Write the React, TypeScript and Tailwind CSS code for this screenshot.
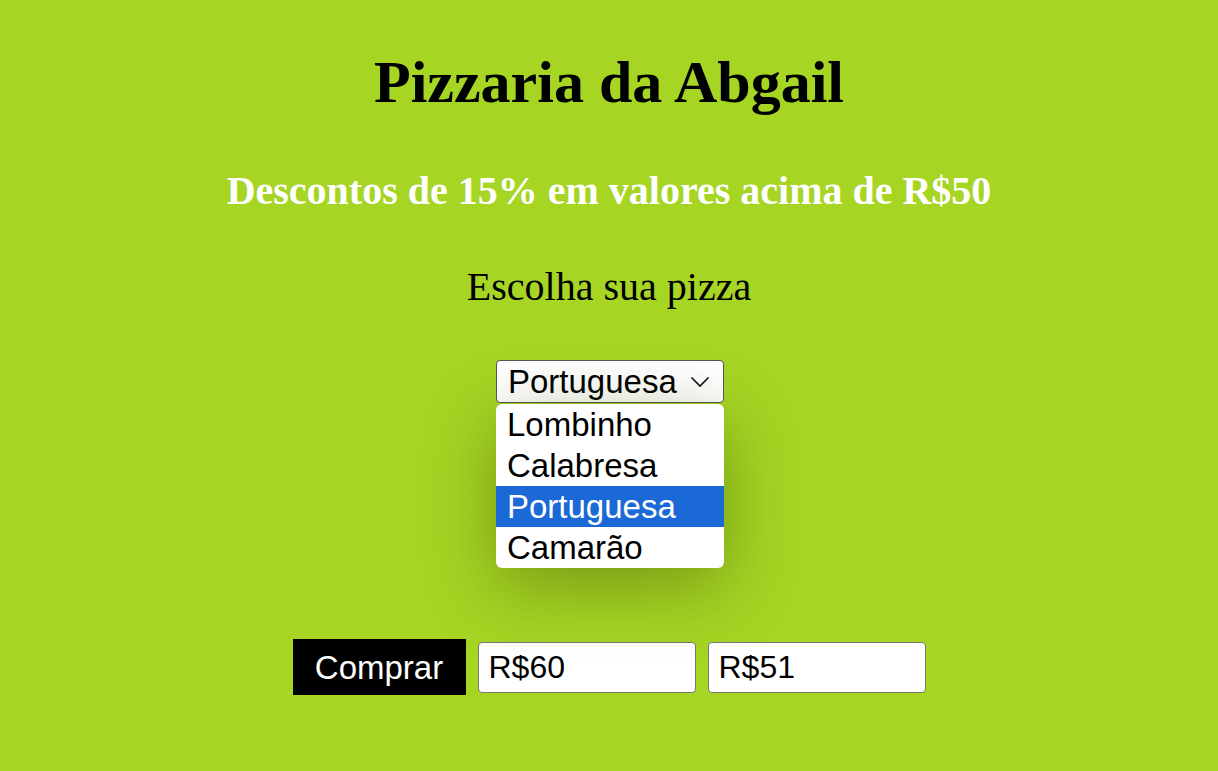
const pizzas = ["Lombinho", "Calabresa", "Portuguesa", "Camarão"];

export default function App() {
  return (
    <div className="min-h-[771px] w-full bg-[#a6d524] flex flex-col items-center font-['Liberation_Serif',serif]">
      <h1 className="mt-[48px] text-[60px] leading-[69px] font-bold text-black">
        Pizzaria da Abgail
      </h1>
      <h2 className="mt-[51px] text-[40px] leading-[46px] font-bold text-white">
        Descontos de 15% em valores acima de R$50
      </h2>
      <p className="mt-[50px] text-[40px] leading-[46px] text-black">
        Escolha sua pizza
      </p>

      {/* select (open) */}
      <div className="relative mt-[50px] ml-[2px] font-['Liberation_Sans',sans-serif]">
        <div className="flex items-center justify-between w-[228px] h-[43px] pl-[11px] pr-[13px] bg-white border border-[#555] rounded-[4px] text-[33px] leading-none text-black">
          <span>Portuguesa</span>
          <svg className="w-[20px] h-[12px]" viewBox="0 0 20 12" fill="none" stroke="#111" strokeWidth="1.6">
            <polyline points="1.5,1.5 10,10 18.5,1.5" />
          </svg>
        </div>
        {/* dropdown list */}
        <ul className="absolute left-0 top-[44px] w-[228px] bg-white rounded-[6px] overflow-hidden shadow-[0_18px_70px_rgba(60,80,0,0.45)] z-10">
          {pizzas.map((p) => (
            <li
              key={p}
              className={
                p === "Portuguesa"
                  ? "h-[41px] pl-[11px] flex items-center text-[33px] leading-none bg-[#1a69d6] text-white"
                  : "h-[41px] pl-[11px] flex items-center text-[33px] leading-none text-black"
              }
            >
              {p}
            </li>
          ))}
        </ul>
      </div>

      <div className="mt-[236px] flex items-center gap-3 font-['Liberation_Sans',sans-serif]">
        <button className="w-[173px] h-[56px] bg-black text-white text-[33px] leading-none">
          Comprar
        </button>
        <div className="w-[218px] h-[51px] flex items-center pl-[10px] bg-white border-[1.5px] border-[#777] rounded-[4px] text-[32px] leading-none text-black">
          R$60
        </div>
        <div className="w-[218px] h-[51px] flex items-center pl-[10px] bg-white border-[1.5px] border-[#777] rounded-[4px] text-[32px] leading-none text-black">
          R$51
        </div>
      </div>
    </div>
  );
}
